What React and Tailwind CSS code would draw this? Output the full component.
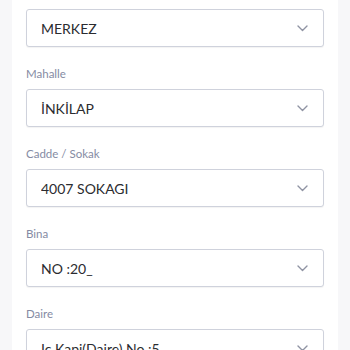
import React from "react";

const fields = [
    { label: null, value: "MERKEZ" },
    { label: "Mahalle", value: "İNKİLAP" },
    { label: "Cadde / Sokak", value: "4007 SOKAGI" },
    { label: "Bina", value: "NO :20_" },
    { label: "Daire", value: "Ic Kapi(Daire) No :5" },
];

function Chevron() {
    return (
        <svg width="11" height="7" viewBox="0 0 11 7" fill="none">
            <path d="M1 1l4.5 4.5L10 1" stroke="#8f93a3" strokeWidth="1.4" strokeLinecap="round" strokeLinejoin="round" />
        </svg>
    );
}

function SelectField({ label, value }) {
    return (
        <div className="flex flex-col">
            {label && (
                <span className="mt-[19px] mb-[7px] h-4 leading-4 text-[11.5px] text-[#858ba3]">{label}</span>
            )}
            {/* fake select box */}
            <div className="flex justify-between items-center pl-[14px] pr-[15px] h-[38px] shrink-0 bg-white border border-[#cfd2dc] rounded-[3px] shadow-[0_1px_1px_rgba(0,0,0,0.05)]">
                <span className="text-[14px] text-[#2b2c30] truncate">{value}</span>
                <Chevron />
            </div>
        </div>
    );
}

export default function App() {
    return (
        <div className="w-[350px] h-[350px] overflow-hidden bg-[#f7f7f9] flex" style={{ fontFamily: 'Lato, "Open Sans", sans-serif' }}>
            <div className="ml-3 w-[326px] h-full bg-white px-[14px] pt-[9px]">
                {fields.map((f, i) => (
                    <SelectField key={i} label={f.label} value={f.value} />
                ))}
            </div>
        </div>
    );
}
